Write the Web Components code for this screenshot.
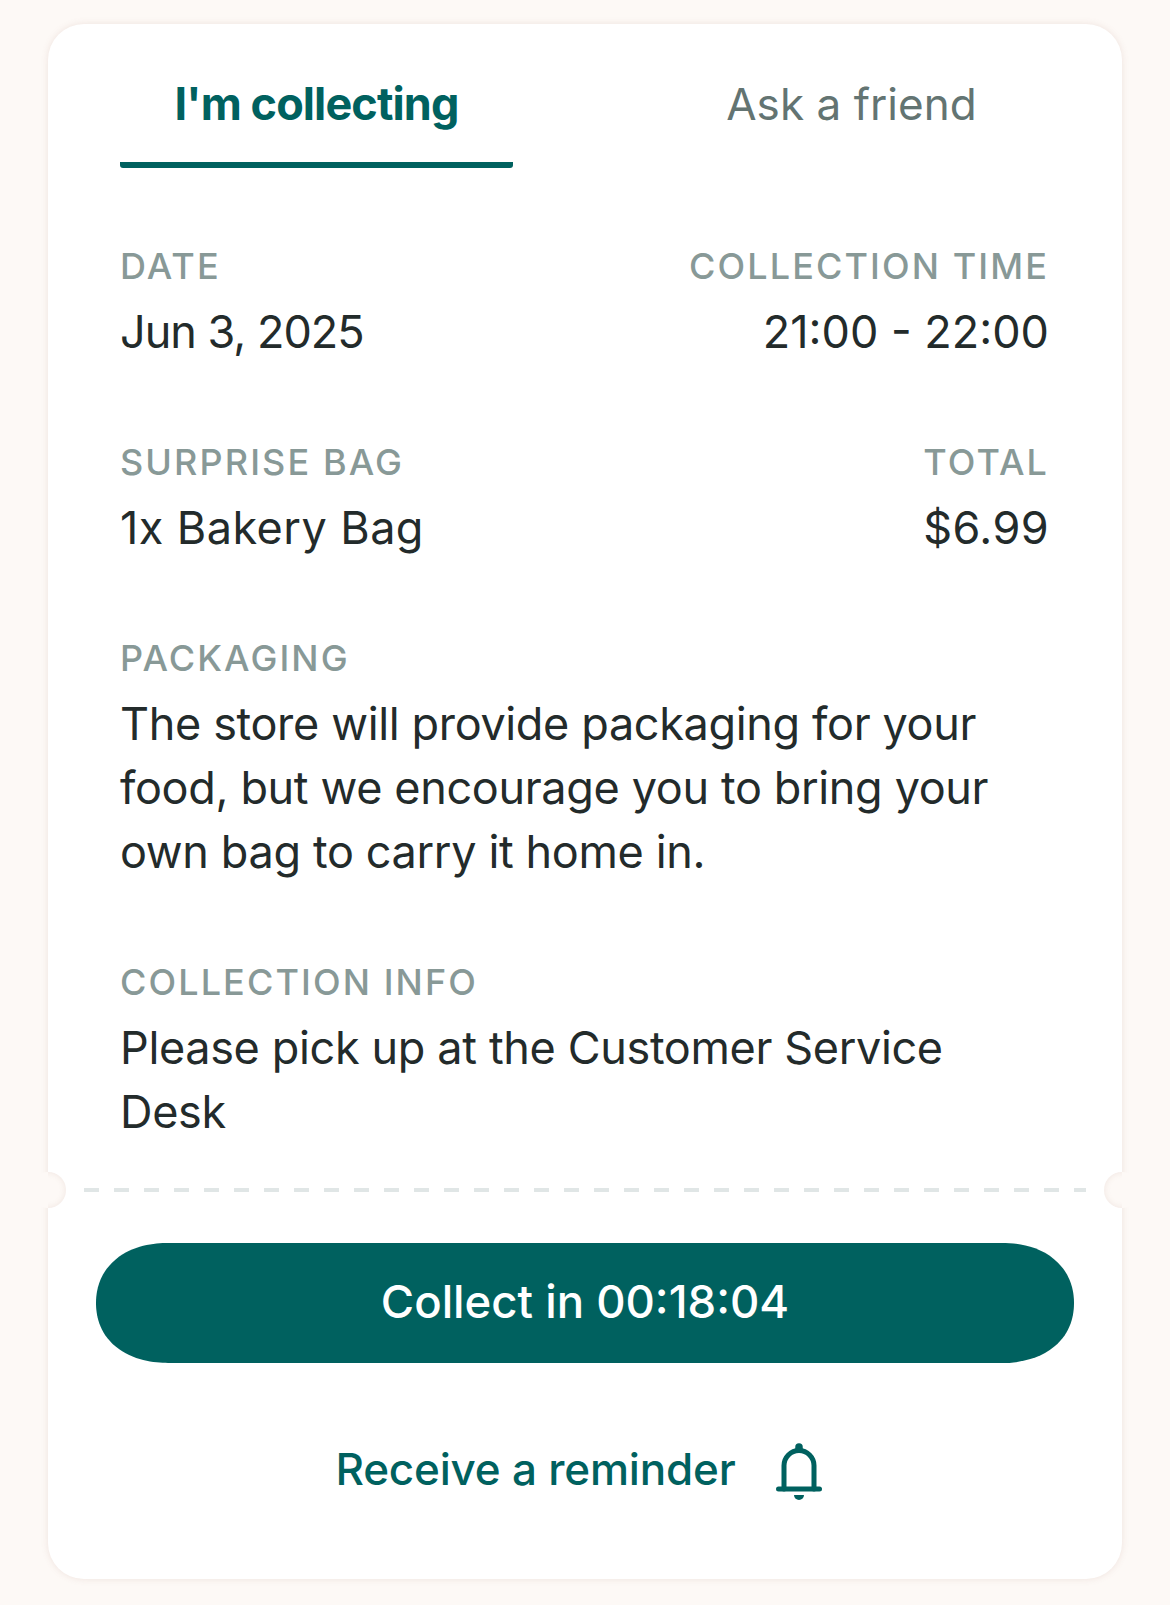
<!DOCTYPE html>
<html lang="en">
<head>
<meta charset="utf-8">
<title>Collection details</title>
<style>
  html, body { margin: 0; background: #fdf9f6; }
  body { font-family: Inter, "Liberation Sans", sans-serif; color: #232b2b; }
</style>
</head>
<body>
<tg-page>
  <tg-ticket>
    <tg-tabs slot="head">
      <tg-tab active>I'm collecting</tg-tab>
      <tg-tab>Ask a friend</tg-tab>
    </tg-tabs>

    <tg-row>
      <tg-field label="Date"><span style="letter-spacing:-1px">Jun 3, 2025</span></tg-field>
      <tg-field label="Collection time" end>21:00 - 22:00</tg-field>
    </tg-row>
    <tg-row>
      <tg-field label="Surprise Bag"><span style="letter-spacing:.45px">1x Bakery Bag</span></tg-field>
      <tg-field label="Total" end><span style="letter-spacing:.4px">$6.99</span></tg-field>
    </tg-row>
    <tg-field label="Packaging" tight>The store will provide packaging for your food, but we encourage you to bring your own bag to carry it home in.</tg-field>
    <tg-field label="Collection info" tight>Please pick up at the Customer Service Desk</tg-field>

    <tg-button slot="foot">Collect in 00:18:04</tg-button>
    <tg-reminder slot="foot">Receive a reminder</tg-reminder>
  </tg-ticket>
</tg-page>

<script>
  // small helper, every element only differs by its css + html
  function defineEl(tag, css, html) {
    customElements.define(tag, class extends HTMLElement {
      constructor() {
        super();
        const root = this.attachShadow({ mode: 'open' });
        root.innerHTML = `<style>${css}</style>${html}`;
      }
      connectedCallback() {
        const label = this.shadowRoot.querySelector('[data-label]');
        if (label) label.textContent = this.getAttribute('label') || '';
      }
    });
  }

  defineEl('tg-page', `
    :host { display: block; padding: 24px 48px 26px; }
  `, `<slot></slot>`);

  defineEl('tg-ticket', `
    :host {
      display: block;
      background: #fff;
      border-radius: 36px;
      box-shadow: 0 0 7px rgba(160, 110, 100, .16);
    }
    .head { padding: 0 74px 0 72px; }
    .body {
      display: flex;
      flex-direction: column;
      gap: 70px;
      padding: 70px 73px 44px 72px;
    }
    .tear {
      position: relative;
      height: 4px;
      margin: 0 36px;
      background: repeating-linear-gradient(90deg, #e0e6e6 0 15px, transparent 15px 30px);
    }
    .notch {
      position: absolute;
      top: -16px;
      width: 36px;
      height: 36px;
      border-radius: 50%;
      background: #fdf9f6;
    }
    .notch::after {
      content: "";
      position: absolute;
      inset: 0;
      border-radius: 50%;
      box-shadow: inset 0 0 6px rgba(160, 110, 100, .14);
    }
    .notch.l { left: -54px; }
    .notch.r { right: -54px; }
    /* only the half that bites into the card shows its edge */
    .notch.l::after { clip-path: inset(0 0 0 18px); }
    .notch.r::after { clip-path: inset(0 18px 0 0); }
    .foot {
      display: flex;
      flex-direction: column;
      align-items: center;
      padding: 51px 48px 78px;
    }
  `, `
    <div class="head"><slot name="head"></slot></div>
    <div class="body"><slot></slot></div>
    <div class="tear"><span class="notch l"></span><span class="notch r"></span></div>
    <div class="foot"><slot name="foot"></slot></div>
  `);

  defineEl('tg-tabs', `
    :host { display: flex; justify-content: space-between; }
  `, `<slot></slot>`);

  defineEl('tg-tab', `
    :host {
      display: block;
      width: 393px;
      height: 144px;
      box-sizing: border-box;
      padding-top: 52px;
      text-align: center;
      font-size: 44px;
      line-height: 56px;
      color: #637472;
      letter-spacing: .05px;
    }
    :host([active]) {
      color: #00615f;
      font-size: 45px;
      font-weight: 700;
      letter-spacing: -.9px;
      background: linear-gradient(#00615f, #00615f) bottom / 100% 6px no-repeat;
      border-radius: 0 0 3px 3px;
    }
  `, `<slot></slot>`);

  defineEl('tg-row', `
    :host { display: flex; justify-content: space-between; }
  `, `<slot></slot>`);

  defineEl('tg-field', `
    :host {
      display: block;
      max-width: 900px;
      font-size: 45px;
      line-height: 64px;
      color: #232b2b;
    }
    :host([end]) { text-align: right; }
    :host([tight]) { letter-spacing: -.35px; }
    .label {
      margin-bottom: 6px;
      font-size: 36px;
      line-height: 56px;
      font-weight: 500;
      letter-spacing: 2.1px;
      text-transform: uppercase;
      color: #889997;
    }
  `, `<div class="label" data-label></div><slot></slot>`);

  defineEl('tg-button', `
    :host {
      display: flex;
      align-items: center;
      justify-content: center;
      align-self: stretch;
      box-sizing: border-box;
      height: 120px;
      padding-bottom: 3px;
      border-radius: 72px / 60px;
      corner-shape: superellipse(1.12);
      background: #00615f;
      color: #fff;
      font-size: 45.5px;
      font-weight: 500;
    }
  `, `<slot></slot>`);

  defineEl('tg-reminder', `
    :host {
      display: flex;
      align-items: flex-start;
      gap: 41px;
      margin: 77px 12px 0 0;
      color: #00615f;
      font-size: 44px;
      line-height: 58px;
      font-weight: 500;
      letter-spacing: -.2px;
    }
    svg { width: 46px; height: 58px; display: block; margin-top: 3px; }
  `, `
    <slot></slot>
    <svg viewBox="0 0 46 58" fill="none" stroke="currentColor" stroke-width="5" stroke-linecap="round">
      <path d="M8 46V22.5a15 15 0 0 1 30 0V46"/>
      <path d="M2.5 46h41"/>
      <path d="M23 4v2" stroke-width="7.5"/>
      <path d="M18 52h10a5 5 0 0 1-10 0z" fill="currentColor" stroke="none"/>
    </svg>
  `);
</script>
</body>
</html>
